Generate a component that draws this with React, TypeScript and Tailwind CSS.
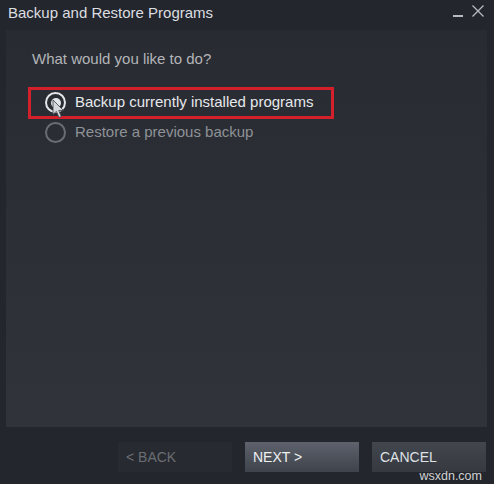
import React from "react";

const font = { fontFamily: "Arial, 'Liberation Sans', sans-serif" };

const RadioOption = ({
  label,
  checked,
  outlined,
}: {
  label: string;
  checked?: boolean;
  outlined?: boolean;
}) => (
  <div
    className={`flex items-center h-[30px] w-[304px] pl-[16px] ${
      outlined ? "outline-[3px] outline-[#d3202b] -outline-offset-2" : ""
    }`}
  >
    <span
      className={`relative flex items-center justify-center w-[21px] h-[21px] rounded-full border-2 ${
        checked ? "border-[#e4e6e9]" : "border-[#6a6d73]"
      }`}
    >
      {checked && <span className="w-[10px] h-[10px] rounded-full bg-[#e4e6e9]" />}
      {checked && (
        <svg
          className="absolute left-[5px] top-[5px] z-10"
          width="13"
          height="20"
          viewBox="0 0 13 20"
        >
          <path
            d="M1 1 L1 15.5 L4.4 12.4 L7 18.5 L9.3 17.5 L6.8 11.5 L11.5 11.5 Z"
            fill="#d4d7db"
            stroke="#3a3d44"
            strokeWidth="0.8"
          />
        </svg>
      )}
    </span>
    <span
      className={`ml-[9px] text-[15px] ${checked ? "text-[#e6e8eb]" : "text-[#8f9297]"}`}
    >
      {label}
    </span>
  </div>
);

const Button = ({ label, variant }: { label: string; variant: "disabled" | "primary" | "normal" }) => {
  const styles = {
    disabled: "bg-[#272a30] text-[#6a6d72]",
    primary: "bg-gradient-to-b from-[#5d626c] to-[#3f434b] text-[#eef0f2]",
    normal: "bg-gradient-to-b from-[#42464e] to-[#363940] text-[#dfe1e4]",
  };
  return (
    <div className={`w-[114px] h-[30px] flex items-center pl-[8px] text-[14px] ${styles[variant]}`}>
      {label}
    </div>
  );
};

export default function App() {
  return (
    <div style={font} className="w-[494px] h-[484px] bg-[#23262c] flex flex-col">
      <div className="flex items-start justify-between h-[30px] pl-[8px] pr-[10px]">
        <span className="text-[15px] text-[#dcdee1] mt-[2px]">Backup and Restore Programs</span>
        <div className="flex items-start gap-[9px] mt-[5px]">
          <span className="w-[10px] h-[2px] bg-[#b8bbc0] mt-[10px]" />
          <svg width="12" height="12" viewBox="0 0 12 12">
            <path d="M0.5 0.5 L11.5 11.5 M11.5 0.5 L0.5 11.5" stroke="#b8bbc0" strokeWidth="1.3" />
          </svg>
        </div>
      </div>
      <div className="mx-[6px] w-[481px] h-[397px] bg-gradient-to-b from-[#282b32] via-[#2c2f36] to-[#30333a] pl-[23px] pt-[18px]">
        <div className="pl-[3px] text-[15px] text-[#b3b5b8]">What would you like to do?</div>
        <div className="mt-[17px] flex flex-col">
          <RadioOption label="Backup currently installed programs" checked outlined />
          <RadioOption label="Restore a previous backup" />
        </div>
      </div>
      <div className="flex justify-end gap-[13px] pr-[8px] mt-[15px]">
        <Button label="< BACK" variant="disabled" />
        <Button label="NEXT >" variant="primary" />
        <Button label="CANCEL" variant="normal" />
      </div>
      <div className="flex justify-end pr-[12px] -mt-[2px] text-[12.5px] leading-none text-[#d0d2d5]">wsxdn.com</div>
    </div>
  );
}
